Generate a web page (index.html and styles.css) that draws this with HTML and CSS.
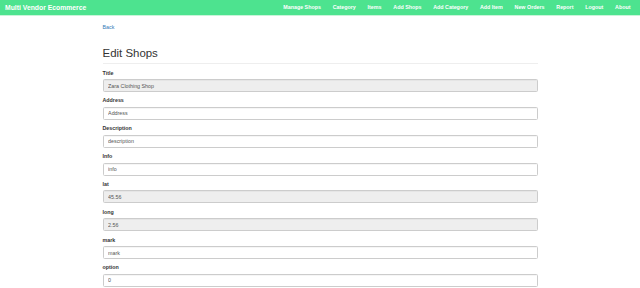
FILE: index.html
```html
<!DOCTYPE html>
<html lang="en">
<head>
  <meta charset="UTF-8">
  <meta name="viewport" content="width=device-width, initial-scale=1.0">
  <title>Edit Shops</title>
  <link rel="stylesheet" href="styles.css">
</head>
<body>
  <div class="navbar">
    <a class="brand" href="#">Multi Vendor Ecommerce</a>
    <div class="nav">
      <a href="#">Manage Shops</a>
      <a href="#">Category</a>
      <a href="#">Items</a>
      <a href="#">Add Shops</a>
      <a href="#">Add Category</a>
      <a href="#">Add Item</a>
      <a href="#">New Orders</a>
      <a href="#">Report</a>
      <a href="#">Logout</a>
      <a href="#">About</a>
    </div>
  </div>

  <div class="container">
    <a class="back" href="#">Back</a>
    <h2 class="title">Edit Shops</h2>

    <form class="form">
      <div class="group">
        <label>Title</label>
        <input class="input" type="text" value="Zara Clothing Shop" disabled>
      </div>
      <div class="group">
        <label>Address</label>
        <input class="input" type="text" value="Address">
      </div>
      <div class="group">
        <label>Description</label>
        <input class="input" type="text" value="description">
      </div>
      <div class="group">
        <label>Info</label>
        <input class="input" type="text" value="info">
      </div>
      <div class="group">
        <label>lat</label>
        <input class="input" type="text" value="45.56" disabled>
      </div>
      <div class="group">
        <label>long</label>
        <input class="input" type="text" value="2.56" disabled>
      </div>
      <div class="group">
        <label>mark</label>
        <input class="input" type="text" value="mark">
      </div>
      <div class="group">
        <label>option</label>
        <input class="input" type="text" value="0">
      </div>
    </form>
  </div>
</body>
</html>
```

FILE: styles.css
```css
body {
  margin: 0;
  background-color: #fff;
  font-family: "Liberation Sans", Arial, sans-serif;
  font-size: 5.34px;
  line-height: 7.6px;
  color: #333;
}

a {
  text-decoration: none;
}

/* top bar */
.navbar {
  display: flex;
  justify-content: space-between;
  align-items: center;
  height: 15px;
  padding: 0 9.5px 0 5px;
  background-color: #4de38f;
  border-bottom: 1px solid #c8f5d9;
}
.brand {
  color: #fff;
  font-size: 6.8px;
  font-weight: 700;
}
.nav {
  display: flex;
  gap: 11.8px;
}
.nav a {
  color: #fff;
  font-weight: 700;
}

/* page */
.container {
  width: 435px;
  margin: 0 auto;
}
.back {
  display: inline-block;
  margin-top: 7.5px;
  color: #337ab7;
}
.title {
  margin: 15.5px 0 0;
  padding-bottom: 4px;
  border-bottom: 1px solid #eee;
  font-size: 11.45px;
  line-height: 12.6px;
  font-weight: 400;
  color: #333;
}

.form {
  margin-top: 5.4px;
}
.group {
  margin-bottom: 5.36px;
}
.group label {
  display: block;
  margin-bottom: 1.9px;
  font-weight: 700;
}
.input {
  display: block;
  box-sizing: border-box;
  width: 100%;
  height: 13px;
  margin: 0;
  padding: 0 4.6px;
  border: 1px solid #ccc;
  border-radius: 1.5px;
  box-shadow: inset 0 0.4px 0.4px rgba(0, 0, 0, 0.075);
  background-color: #fff;
  font-family: inherit;
  font-size: 5.34px;
  color: #555;
}
.input:disabled {
  background-color: #eee;
  color: #555;
  opacity: 1;
}
```
